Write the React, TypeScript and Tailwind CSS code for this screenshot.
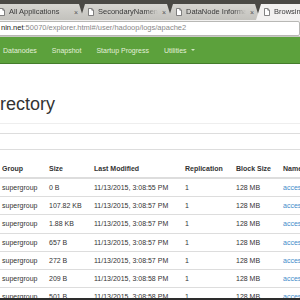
import React from 'react'

const tabs = [
  { title: 'All Applications', active: false },
  { title: 'SecondaryNamenode information', active: false },
  { title: 'DataNode Information', active: false },
  { title: 'Browsing HDFS', active: true },
]

const navItems = ['Datanodes', 'Snapshot', 'Startup Progress']

const files = [
  { size: '0 B', time: '3:08:55', name: 'access.log' },
  { size: '107.82 KB', time: '3:08:57', name: 'access.log.1' },
  { size: '1.88 KB', time: '3:08:57', name: 'access.log.10.gz' },
  { size: '657 B', time: '3:08:57', name: 'access.log.11.gz' },
  { size: '272 B', time: '3:08:57', name: 'access.log.12.gz' },
  { size: '209 B', time: '3:08:58', name: 'access.log.13.gz' },
  { size: '501 B', time: '3:08:58', name: 'access.log.14.gz' },
]

const cols = 'grid grid-cols-[47px_45px_91px_51px_47px_1fr] items-center pl-[2px] whitespace-nowrap'

function PageIcon() {
  return (
    <svg width="6" height="8" viewBox="0 0 6 8" className="shrink-0">
      <path d="M0.5 0.5 H3.8 L5.5 2.2 V7.5 H0.5 Z" fill="#fff" stroke="#666" strokeWidth="0.8" />
      <path d="M3.8 0.5 V2.2 H5.5" fill="none" stroke="#666" strokeWidth="0.8" />
    </svg>
  )
}

function TabStrip() {
  return (
    <div className="h-[20px] bg-[#4a4945] flex items-end overflow-hidden shrink-0">
      {tabs.map((tab, i) => (
        <div
          key={tab.title}
          className={`h-[16px] shrink-0 flex items-center gap-[4px] pl-[8px] pr-[6px] [clip-path:polygon(5px_0,calc(100%_-_5px)_0,100%_100%,0_100%)] ${
            i === 0 ? 'w-[93px] -ml-[9px]' : 'w-[92px] -ml-[4px]'
          } ${tab.active ? 'bg-[#f2f1f0]' : 'bg-gradient-to-b from-[#d6d5d1] to-[#c3c2bd]'}`}
        >
          <PageIcon />
          <span className="flex-1 min-w-0 overflow-hidden whitespace-nowrap text-[7.5px] leading-none text-[#3a3a3a] [mask-image:linear-gradient(to_right,black_80%,transparent)]">
            {tab.title}
          </span>
          {!tab.active && <span className="shrink-0 text-[7px] leading-none text-[#555]">×</span>}
        </div>
      ))}
    </div>
  )
}

function AddressBar() {
  return (
    <div className="h-[17px] bg-[#f2f1f0] flex items-center shrink-0 border-b border-[#c9c8c4]">
      <div className="h-[15px] flex-1 -ml-[4px] bg-white border border-[#b8b8b5] rounded-[2px] flex items-center pl-[4px] overflow-hidden">
        <span className="text-[7.5px] leading-none whitespace-nowrap text-[#888]">
          <span className="text-[#222]">nin.net</span>:50070/explorer.html#/user/hadoop/logs/apache2
        </span>
      </div>
    </div>
  )
}

function NavBar() {
  return (
    <div className="h-[27px] bg-[#5ca13c] border-b border-[#447d2b] flex items-center gap-[15px] pl-[3px] shrink-0 text-[7px] leading-none text-[#e3f0da] whitespace-nowrap">
      {navItems.map(item => (
        <span key={item}>{item}</span>
      ))}
      <span className="flex items-center gap-[4px]">
        Utilities
        <span className="w-0 h-0 border-x-[2px] border-x-transparent border-t-[2px] border-t-[#cfe6c2]" />
      </span>
    </div>
  )
}

function FileTable() {
  return (
    <div className="text-[7px] leading-none text-[#333]">
      <div className={`${cols} h-[19px] border-b-2 border-[#ddd] font-bold`}>
        <span>Group</span>
        <span>Size</span>
        <span>Last Modified</span>
        <span>Replication</span>
        <span>Block Size</span>
        <span>Name</span>
      </div>
      {files.map(f => (
        <div key={f.name} className={`${cols} h-[18.2px] border-b border-[#ddd]`}>
          <span>supergroup</span>
          <span>{f.size}</span>
          <span>11/13/2015, {f.time} PM</span>
          <span>1</span>
          <span>128 MB</span>
          <span className="text-[#428bca]">{f.name}</span>
        </div>
      ))}
    </div>
  )
}

export default function App() {
  return (
    <div className="w-[300px] h-[300px] flex flex-col overflow-hidden bg-white font-['Liberation_Sans',Arial,sans-serif]">
      <TabStrip />
      <AddressBar />
      <NavBar />
      <div className="flex-1 overflow-hidden">
        <div className="mt-[30px] pb-[9px] border-b border-[#eee]">
          <h1 className="text-[18px] leading-[20px] text-[#333] whitespace-nowrap -ml-[82px]">Browse Directory</h1>
        </div>
        <div className="mt-[9px] h-[17px] border-y border-[#ddd]" />
        <div className="mt-[10px]">
          <FileTable />
        </div>
      </div>
      <div className="h-[2px] bg-[#2d2d2d] shrink-0" />
    </div>
  )
}
